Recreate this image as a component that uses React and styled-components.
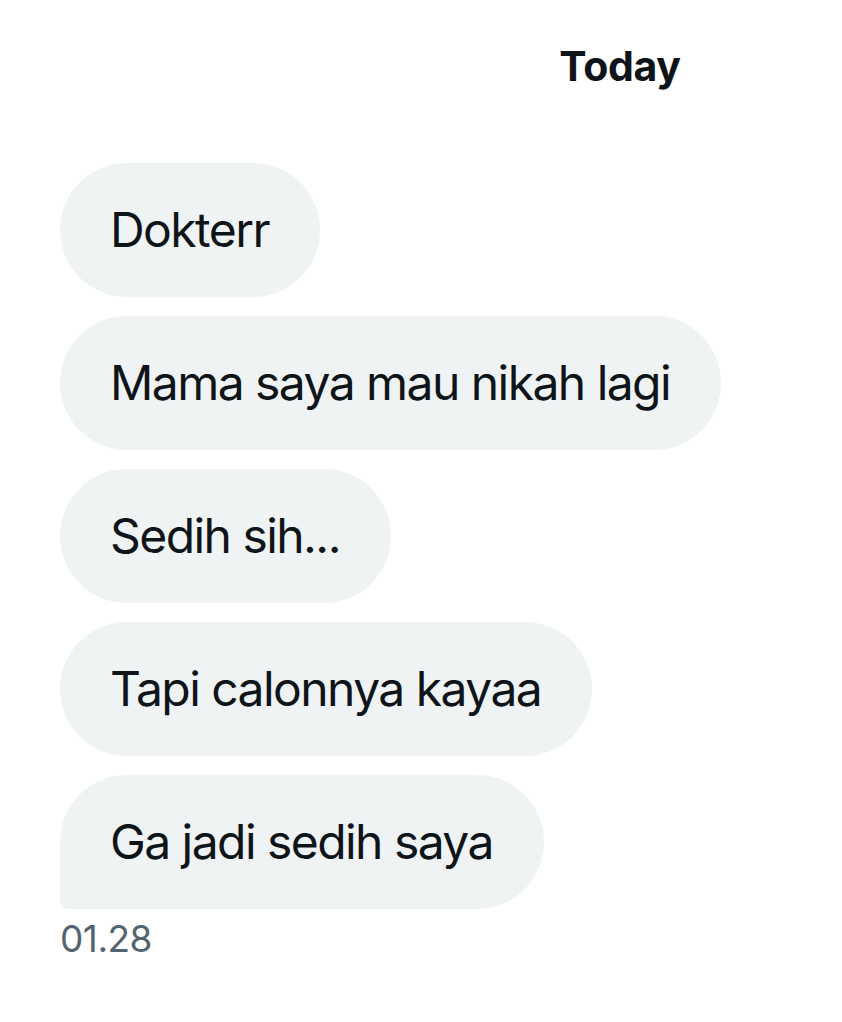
import React from 'react';
import styled, { createGlobalStyle } from 'styled-components';

const GlobalStyle = createGlobalStyle`
  html, body {
    margin: 0;
    padding: 0;
    background: #ffffff;
  }
  body {
    font-family: Inter, "Noto Sans", "Liberation Sans", sans-serif;
    color: #0f1419;
  }
`;

const Page = styled.div`
  width: 842px;
  min-height: 1022px;
  box-sizing: border-box;
  padding: 40px 0 0 60px;
  display: flex;
  flex-direction: column;
`;

const DayHeader = styled.div`
  padding-left: 338px;
  text-align: center;
  font-size: 41px;
  font-weight: 700;
  line-height: 52px;
  letter-spacing: -0.3px;
  margin-bottom: 71px;
`;

const Thread = styled.div`
  display: flex;
  flex-direction: column;
  align-items: flex-start;
  gap: 19px;
`;

const Bubble = styled.div`
  background: #eff3f4;
  border-radius: 67px;
  border-bottom-left-radius: ${props => (props.$last ? '8px' : '67px')};
  padding: 37px 51px 37px 50px;
  font-size: 48px;
  line-height: 60px;
  letter-spacing: -1.55px;
  white-space: nowrap;
`;

const Time = styled.div`
  margin-top: 8px;
  font-size: 37px;
  line-height: 44px;
  color: #536471;
  letter-spacing: -0.5px;
`;

const messages = [
  'Dokterr',
  'Mama saya mau nikah lagi',
  'Sedih sih...',
  'Tapi calonnya kayaa',
  'Ga jadi sedih saya',
];

export default function App() {
  return (
    <>
      <GlobalStyle />
      <Page>
        <DayHeader>Today</DayHeader>
        <Thread>
          {messages.map((m, i) => (
            <Bubble key={i} $last={i === messages.length - 1}>
              {m}
            </Bubble>
          ))}
        </Thread>
        <Time>01.28</Time>
      </Page>
    </>
  );
}
